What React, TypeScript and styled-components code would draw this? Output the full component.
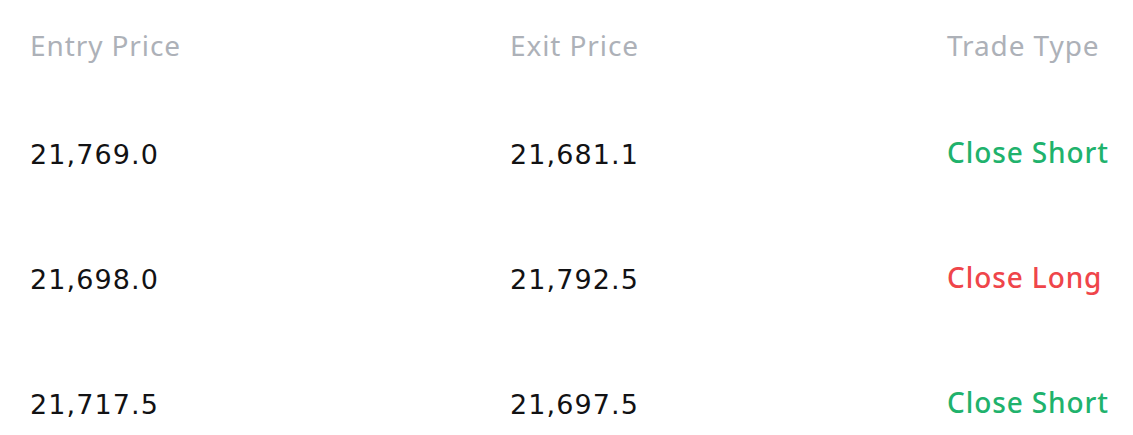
import React from "react";
import styled, { createGlobalStyle } from "styled-components";

const Global = createGlobalStyle`
  html, body { margin: 0; padding: 0; background: #ffffff; }
  body { font-family: "Noto Sans", "Open Sans", sans-serif; }
`;

const Table = styled.div`
  display: grid;
  grid-template-columns: 480px 437px 1fr;
  grid-auto-rows: 125px;
  grid-template-rows: 89px;
  padding-left: 30px;
`;

const Cell = styled.div<{ $tone?: "head" | "body" | "up" | "down" }>`
  display: flex;
  align-items: center;
  font-size: 28px;
  letter-spacing: 0.9px;
  white-space: nowrap;
  font-weight: ${(p) => (p.$tone === "up" || p.$tone === "down" ? 500 : 400)};
  color: ${(p) =>
    p.$tone === "head"
      ? "#adb1b8"
      : p.$tone === "up"
      ? "#20b26c"
      : p.$tone === "down"
      ? "#ef454a"
      : "#121214"};
`;

const Num = styled(Cell)`
  font-family: "DejaVu Sans", "Noto Sans", sans-serif;
  font-size: 27px;
  letter-spacing: 1.1px;
  padding-top: 5px;
`;

const rows = [
  { entry: "21,769.0", exit: "21,681.1", type: "Close Short", up: true },
  { entry: "21,698.0", exit: "21,792.5", type: "Close Long", up: false },
  { entry: "21,717.5", exit: "21,697.5", type: "Close Short", up: true },
];

export default function App() {
  return (
    <>
      <Global />
      <Table>
        <Cell $tone="head">Entry Price</Cell>
        <Cell $tone="head">Exit Price</Cell>
        <Cell $tone="head">Trade Type</Cell>
        {rows.map((r, i) => (
          <React.Fragment key={i}>
            <Num $tone="body">{r.entry}</Num>
            <Num $tone="body">{r.exit}</Num>
            <Cell $tone={r.up ? "up" : "down"}>{r.type}</Cell>
          </React.Fragment>
        ))}
      </Table>
    </>
  );
}
